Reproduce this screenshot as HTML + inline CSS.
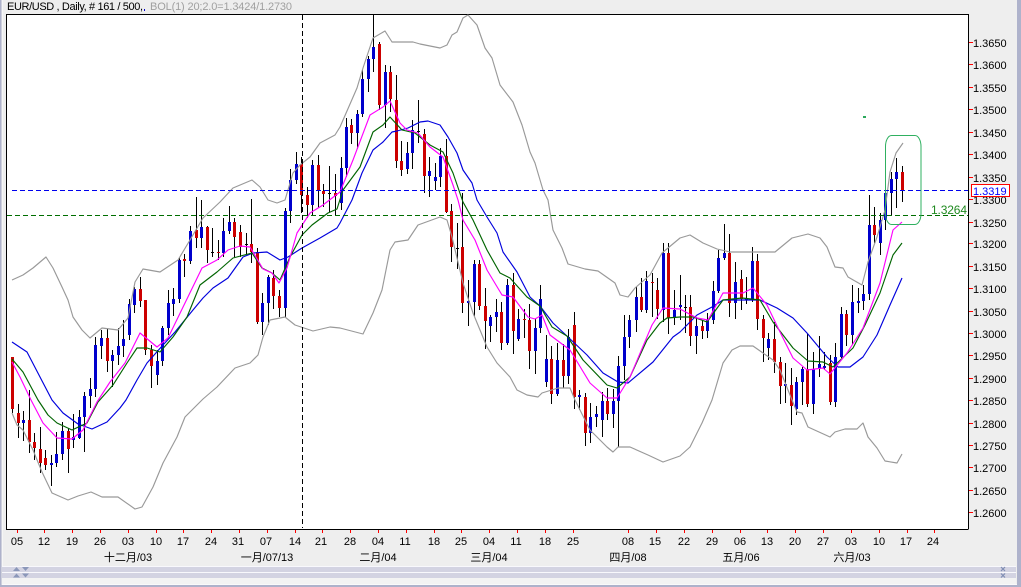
<!DOCTYPE html>
<html><head><meta charset="utf-8"><style>
html,body{margin:0;padding:0;width:1021px;height:587px;overflow:hidden;background:#eee}
svg{display:block;position:absolute;left:0;top:0}
text{font-family:"Liberation Sans","WenQuanYi Zen Hei","Noto Sans CJK SC",sans-serif;font-size:11px;fill:#000}
</style></head><body>
<svg width="1021" height="587" viewBox="0 0 1021 587" xmlns="http://www.w3.org/2000/svg">
<rect width="1021" height="587" fill="#eeeeee"/>
<rect x="0" y="0" width="1.5" height="587" fill="#aeb2cb"/>
<rect x="2" y="0" width="1" height="585" fill="#f6f6f6"/>
<rect x="1017" y="0" width="4" height="587" fill="#aeb2cb"/>
<rect x="0" y="585" width="1021" height="2" fill="#aeb2cb"/>
<rect x="2" y="584" width="1015" height="1" fill="#fafafa"/>
<rect x="2" y="566" width="1014" height="1" fill="#f8f8fc"/>
<rect x="2" y="567" width="1014" height="5" fill="#d3d3e2"/>
<rect x="2" y="572" width="1014" height="1" fill="#f8f8fc"/>
<rect x="2" y="573" width="1014" height="5" fill="#d3d3e2"/>
<rect x="2" y="578" width="1014" height="6" fill="#f3f3f3"/>
<path d="M13 571l3.500-4 3.500 4zM13 577.500l3.500-4 3.500 4zM22 567h7l-3.500 4zM22 573.500h7l-3.500 4z" fill="#8b97b9"/>
<path d="M1001 567l4 4M1005 567l-4 4M1001 573.500l4 4M1005 573.500l-4 4" stroke="#7f8db3" stroke-width="1.200" fill="none"/>

<rect x="7" y="14.500" width="961" height="514.500" fill="#fff"/>
<path d="M6.500 14.500H968.500V529M6.500 14V529.500H968.500" fill="none" stroke="#000" stroke-width="1" shape-rendering="crispEdges"/>

<g shape-rendering="crispEdges" fill="none">
<path stroke="#000" stroke-width="1" d="M12.500 357V413M18.500 404V438M23.500 411V441M29.500 390V453M34.500 433V460M40.500 427V473M45.500 450V470M51.500 455V486M56.500 432V467M62.500 422V460M68.500 428V473M73.500 414V448M79.500 410V439M84.500 392V452M90.500 378V408M95.500 337V397M101.500 330V359M107.500 329V372M112.500 350V387M118.500 328V365M123.500 320V357M129.500 299V340M134.500 287V313M140.500 277V307M145.500 300V355M151.500 345V388M157.500 350V385M162.500 326V366M168.500 290V335M173.500 288V316M179.500 257V303M184.500 254V277M190.500 226V264M196.500 197V248M201.500 200V248M207.500 226V263M212.500 228V257M218.500 240V260M223.500 218V257M229.500 206V234M234.500 218V257M240.500 225V257M246.500 233V255M251.500 199V263M257.500 248V324M262.500 293V335M268.500 275V325M273.500 270V309M279.500 290V317M285.500 208V317M290.500 169V223M296.500 152V184M301.500 157V213M307.500 187V218M312.500 160V215M318.500 155V208M323.500 184V207M329.500 166V212M335.500 174V215M341.500 157V210M346.500 118V177M351.500 119V144M357.500 110V149M362.500 70V117M368.500 56V92M373.500 15V72M379.500 42V110M385.500 65V128M390.500 66V112M396.500 75V168M401.500 141V176M407.500 142V174M412.500 120V169M418.500 100V143M424.500 129V193M429.500 157V197M435.500 163V190M440.500 148V187M446.500 139V213M451.500 204V262M457.500 223V269M462.500 193V313M468.500 280V326M474.500 260V316M479.500 260V310M485.500 288V349M490.500 315V342M496.500 299V332M501.500 302V350M507.500 279V345M513.500 273V354M518.500 309V341M524.500 309V338M529.500 304V369M535.500 319V374M540.500 285V333M546.500 335V387M551.500 346V404M557.500 343V396M563.500 344V388M568.500 329V384M574.500 312V409M579.500 390V410M585.500 393V446M590.500 403V443M596.500 406V427M602.500 392V437M607.500 388V420M613.500 389V428M618.500 356V447M624.500 315V380M629.500 315V348M636.500 287V332M641.500 278V312M646.500 271V313M652.500 273V317M657.500 278V319M663.500 243V322M668.500 243V334M674.500 290V325M680.500 275V320M685.500 295V333M690.500 295V346M696.500 317V354M702.500 320V339M707.500 313V338M713.500 281V324M718.500 250V293M724.500 224V260M729.500 234V317M735.500 262V319M741.500 270V310M746.500 277V304M752.500 247V302M757.500 254V330M763.500 315V362M768.500 333V360M774.500 322V373M780.500 357V404M785.500 363V403M791.500 368V425M796.500 377V415M802.500 367V405M807.500 334V407M813.500 352V414M819.500 336V377M824.500 352V370M830.500 355V405M835.500 343V407M841.500 307V358M846.500 310V346M852.500 285V345M858.500 288V313M863.500 285V310M869.500 195V300M874.500 207V243M880.500 213V255M885.500 180V230M891.500 172V215M896.500 158V208M902.500 166V202"/>
<path stroke="#000" stroke-width="3" d="M212.500 252V253M246.500 244V245M329.500 193V194M418.500 131V132M457.500 248V249M685.500 307V308"/>
<path stroke="#cc0000" stroke-width="3" d="M12.500 357V409M18.500 413V423M29.500 420V442M34.500 442V448M40.500 449V463M45.500 458V465M68.500 431V449M107.500 338V361M140.500 289V301M145.500 300V350M151.500 350V366M184.500 259V261M196.500 230V238M207.500 227V250M218.500 252V253M234.500 222V237M240.500 232V247M251.500 244V252M257.500 252V322M273.500 278V296M279.500 296V308M301.500 164V195M307.500 195V205M318.500 165V190M323.500 191V194M335.500 193V196M351.500 125V133M379.500 44V105M390.500 72V99M396.500 100V161M401.500 161V170M424.500 134V176M446.500 156V212M451.500 211V247M462.500 247V303M479.500 264V306M485.500 306V321M501.500 312V343M513.500 285V331M524.500 319V320M529.500 320V351M551.500 359V394M563.500 360V376M574.500 325V397M585.500 397V433M607.500 401V414M641.500 297V310M652.500 282V283M657.500 290V309M668.500 253V318M690.500 307V336M702.500 326V331M729.500 253V303M741.500 279V299M757.500 261V319M763.500 319V338M774.500 339V362M780.500 362V386M791.500 385V406M807.500 369V404M830.500 363V402M846.500 314V335M874.500 225V235M902.500 172V190"/>
<path stroke="#0000cc" stroke-width="3" d="M23.500 420V423M51.500 463V465M56.500 454V463M62.500 431V454M73.500 437V440M79.500 417V438M84.500 396V417M90.500 389V396M95.500 345V389M101.500 338V346M112.500 355V361M118.500 346V355M123.500 339V346M129.500 304V335M134.500 289V305M157.500 361V375M162.500 328V361M168.500 303V328M173.500 299V304M179.500 260V299M190.500 231V261M201.500 227V238M223.500 231V253M229.500 222V231M262.500 303V322M268.500 277V303M285.500 211V308M290.500 180V211M296.500 164V180M312.500 165V205M341.500 168V203M346.500 127V168M357.500 114V133M362.500 79V114M368.500 59V79M373.500 47V59M385.500 72V105M407.500 153V169M412.500 130V153M429.500 171V176M435.500 177V181M440.500 156V177M468.500 301V303M474.500 264V302M490.500 317V326M496.500 312V317M507.500 285V343M518.500 319V339M535.500 328V351M540.500 299V328M546.500 359V382M557.500 360V394M568.500 337V376M579.500 395V397M590.500 417V433M596.500 414V417M602.500 401V420M613.500 401V414M618.500 366V401M624.500 337V366M629.500 320V337M636.500 297V320M646.500 281V310M663.500 253V310M674.500 310V318M680.500 305V307M696.500 326V336M707.500 320V331M713.500 291V320M718.500 258V291M724.500 253V258M735.500 282V303M746.500 299V300M752.500 261V299M768.500 339V348M785.500 384V386M796.500 382V409M802.500 369V382M813.500 369V404M819.500 364V369M824.500 366V368M835.500 357V402M841.500 314V357M852.500 302V335M858.500 301V303M863.500 294V301M869.500 225V294M880.500 220V243M885.500 193V220M891.500 179V193M896.500 172V179"/>
</g>

<g fill="none" stroke-width="1.150" stroke-linejoin="round">
<polyline stroke="#999999" points="12,280 23,275 33,268 46,257 53,268 62,287 68,300 73,317 82,330 90,338 102,328 118,330 128,318 135,282 143,269 160,272 178,260 190,240 203,218 220,202 233,188 252,180 260,187 268,200 277,203 285,200 293,173 300,165 310,157 320,143 335,135 340,127 357,88 363,68 373,38 385,31 392,42 413,42 420,44 440,48 447,45 452,35 457,32 463,18 468,15 477,25 485,48 492,58 500,85 513,102 522,125 530,152 535,163 543,190 548,200 553,230 562,248 568,264 585,269 598,271 615,283 620,295 628,297 635,288 650,275 662,253 680,238 690,235 703,243 717,249 730,252 750,252 775,252 792,238 808,234 820,238 827,247 835,267 843,268 848,277 862,285 868,262 877,237 885,210 890,172 896,153 903,143"/>
<polyline stroke="#999999" points="12,413 17,425 23,430 33,450 42,472 52,493 68,500 78,496 91,492 102,497 118,497 135,509 142,507 153,487 163,463 177,437 185,417 203,399 217,387 235,368 250,363 258,355 263,337 270,320 285,317 295,325 313,331 330,327 340,328 363,334 373,313 382,290 385,275 390,250 395,242 408,240 418,225 440,217 447,220 452,237 463,283 473,313 487,347 497,363 510,377 517,390 527,395 538,397 542,393 558,388 570,388 575,400 590,430 607,447 613,452 618,447 630,447 648,455 663,462 680,456 690,447 702,423 712,400 723,363 732,350 740,346 753,346 773,360 780,370 792,400 797,412 802,413 808,427 830,437 835,432 845,429 857,429 863,423 868,437 877,448 885,461 897,463 902,454"/>
<polyline stroke="#0000dd" points="12,342 27,352 40,377 52,400 63,413 78,424 92,429 107,422 120,408 126,400 137,380 147,363 163,345 175,332 193,310 203,298 213,288 228,278 243,257 253,253 267,252 280,260 288,257 302,248 320,238 337,228 340,223 352,200 362,173 373,150 383,142 392,132 397,131 408,128 420,122 428,121 440,125 448,137 457,153 463,170 472,183 477,200 487,217 497,233 503,252 517,272 530,297 540,306 553,323 568,337 587,355 603,373 618,382 628,383 653,362 673,337 680,332 697,315 712,307 723,300 760,300 777,308 793,318 807,333 827,357 838,367 850,367 863,357 877,335 890,305 902,278"/>
<polyline stroke="#006400" points="12,359 23,372 38,400 48,415 57,423 72,430 87,423 98,402 113,385 127,363 137,348 147,348 160,352 173,337 187,317 200,285 217,272 233,258 252,253 262,268 272,273 280,280 290,257 302,235 312,225 328,213 337,209 343,190 360,167 373,132 383,125 390,117 402,130 415,133 430,145 443,152 453,173 463,202 473,220 487,250 500,273 510,278 527,297 540,306 552,327 567,336 583,360 607,385 617,388 630,377 647,340 660,323 667,318 680,317 693,317 707,322 723,300 742,298 760,300 773,322 793,348 808,361 823,362 833,367 853,348 865,325 880,293 893,255 902,243"/>
<polyline stroke="#ff00ff" points="12,362 20,377 31,400 43,423 57,438 72,439 83,430 97,402 110,382 125,363 140,333 157,347 168,338 185,303 202,268 217,260 228,250 240,246 250,247 263,269 272,273 279,283 287,268 297,233 310,213 323,205 340,192 353,160 370,115 383,107 390,101 400,123 407,130 418,133 430,147 443,157 453,185 458,200 463,220 475,240 487,270 502,295 513,297 528,317 535,319 542,315 550,335 570,350 590,383 607,398 617,398 630,377 652,325 663,308 680,309 697,318 708,320 723,293 743,293 753,288 767,305 780,332 793,358 807,370 823,368 830,374 847,353 863,328 880,283 893,230 902,222"/>
</g>

<g shape-rendering="crispEdges" fill="none">
<path d="M12 190.500H968" stroke="#0000ee" stroke-dasharray="5 3"/>
<path d="M7 215.500H968" stroke="#006e00" stroke-dasharray="5 3"/>
<path d="M302.500 15V528" stroke="#000" stroke-dasharray="5 3"/>
<rect x="863" y="116" width="3" height="2" fill="#2ca85c"/>
</g>
<rect x="885.500" y="135.500" width="35.500" height="89" rx="6" ry="11" fill="none" stroke="#2fb060" stroke-width="1"/>

<g shape-rendering="crispEdges" fill="none" stroke="#ff0000">
<path d="M969 42.500h4M969 64.500h4M969 87.500h4M969 109.500h4M969 132.500h4M969 154.500h4M969 177.500h4M969 199.500h4M969 222.500h4M969 243.500h4M969 266.500h4M969 288.500h4M969 311.500h4M969 333.500h4M969 355.500h4M969 378.500h4M969 400.500h4M969 423.500h4M969 445.500h4M969 467.500h4M969 490.500h4M969 512.500h4"/>
<path d="M17.500 530v3M44.500 530v3M72.500 530v3M100.500 530v3M128.500 530v3M156.500 530v3M183.500 530v3M211.500 530v3M239.500 530v3M267.500 530v3M295.500 530v3M322.500 530v3M350.500 530v3M378.500 530v3M406.500 530v3M461.500 530v3M489.500 530v3M434.500 530v3M517.500 530v3M545.500 530v3M573.500 530v3M628.500 530v3M656.500 530v3M684.500 530v3M712.500 530v3M740.500 530v3M767.500 530v3M795.500 530v3M823.500 530v3M851.500 530v3M879.500 530v3M907.500 530v3M934.500 530v3"/>
</g>

<text x="7" y="10" textLength="136" lengthAdjust="spacing">EUR/USD , Daily, # 161 / 500,</text>
<rect x="144" y="9" width="1" height="2" fill="#0000cc"/>
<text x="150" y="10" textLength="142" lengthAdjust="spacing" style="fill:#a0a0a0">BOL(1) 20;2.0=1.3424/1.2730</text>

<g>
<text x="973" y="47">1.3650</text><text x="973" y="69">1.3600</text><text x="973" y="92">1.3550</text><text x="973" y="114">1.3500</text><text x="973" y="137">1.3450</text><text x="973" y="159">1.3400</text><text x="973" y="182">1.3350</text><text x="973" y="204">1.3300</text><text x="973" y="227">1.3250</text><text x="973" y="248">1.3200</text><text x="973" y="271">1.3150</text><text x="973" y="293">1.3100</text><text x="973" y="316">1.3050</text><text x="973" y="338">1.3000</text><text x="973" y="360">1.2950</text><text x="973" y="383">1.2900</text><text x="973" y="405">1.2850</text><text x="973" y="428">1.2800</text><text x="973" y="450">1.2750</text><text x="973" y="472">1.2700</text><text x="973" y="495">1.2650</text><text x="973" y="517">1.2600</text>
</g>
<rect x="971.500" y="184.500" width="38" height="12" fill="#fff" stroke="#ff0000" stroke-width="1" shape-rendering="crispEdges"/>
<text x="973" y="195" style="fill:#0000ff">1.3319</text>
<text x="931" y="214" textLength="36" lengthAdjust="spacing" style="font-size:12px;fill:#1f8a1f">1.3264</text>

<g text-anchor="middle">
<text x="17" y="545">05</text><text x="44" y="545">12</text><text x="72" y="545">19</text><text x="100" y="545">26</text><text x="128" y="545">03</text><text x="156" y="545">10</text><text x="183" y="545">17</text><text x="211" y="545">24</text><text x="238" y="545">31</text><text x="266" y="545">07</text><text x="295" y="545">14</text><text x="321" y="545">21</text><text x="350" y="545">28</text><text x="378" y="545">04</text><text x="405" y="545">11</text><text x="434" y="545">18</text><text x="461" y="545">25</text><text x="489" y="545">04</text><text x="516" y="545">11</text><text x="545" y="545">18</text><text x="573" y="545">25</text><text x="628" y="545">08</text><text x="655" y="545">15</text><text x="684" y="545">22</text><text x="712" y="545">29</text><text x="740" y="545">06</text><text x="767" y="545">13</text><text x="795" y="545">20</text><text x="823" y="545">27</text><text x="851" y="545">03</text><text x="879" y="545">10</text><text x="906" y="545">17</text><text x="933" y="545">24</text>
<text x="128" y="561">十二月/03</text><text x="267" y="561">一月/07/13</text><text x="378" y="561">二月/04</text><text x="489" y="561">三月/04</text><text x="628" y="561">四月/08</text><text x="741" y="561">五月/06</text><text x="852" y="561">六月/03</text>
</g>
</svg>
</body></html>
